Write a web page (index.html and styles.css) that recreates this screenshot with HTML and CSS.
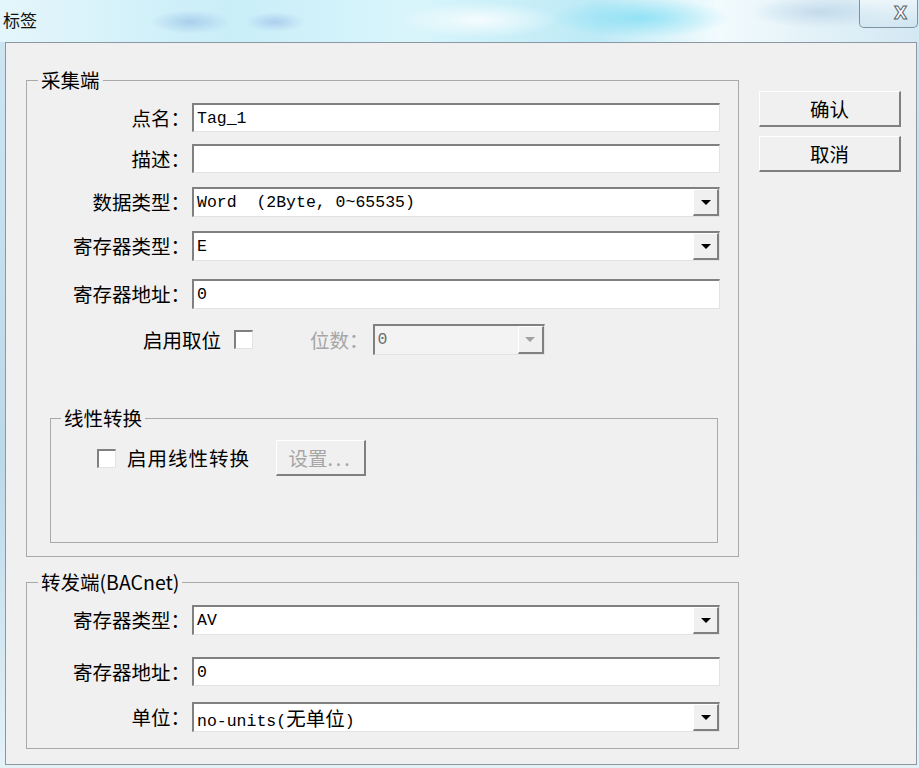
FILE: index.html
```html
<!DOCTYPE html>
<html lang="zh-CN">
<head>
    <meta charset="UTF-8">
    <title>标签</title>
    <link rel="stylesheet" href="styles.css">
</head>
<body>
    <div class="window">
        <div class="titlebar">
            <span class="title">标签</span>
            <span class="close">X</span>
        </div>
        <div class="client">
            <div class="left">
                <fieldset class="group main">
                    <legend>采集端</legend>
                    <div class="row r-name">
                        <label>点名：</label>
                        <input class="edit" type="text" value="Tag_1">
                    </div>
                    <div class="row r-desc">
                        <label>描述：</label>
                        <input class="edit" type="text" value="">
                    </div>
                    <div class="row r-type">
                        <label>数据类型：</label>
                        <div class="combo"><span class="value">Word  (2Byte, 0~65535)</span><span class="arrow"></span></div>
                    </div>
                    <div class="row r-reg">
                        <label>寄存器类型：</label>
                        <div class="combo"><span class="value">E</span><span class="arrow"></span></div>
                    </div>
                    <div class="row r-addr">
                        <label>寄存器地址：</label>
                        <input class="edit tall" type="text" value="0">
                    </div>
                    <div class="bitrow">
                        <span class="lbl">启用取位</span>
                        <span class="check"></span>
                        <span class="lbl disabled-lbl">位数：</span>
                        <div class="combo small disabled"><span class="value">0</span><span class="arrow"></span></div>
                    </div>
                    <fieldset class="group linear">
                        <legend>线性转换</legend>
                        <div class="linrow">
                            <span class="check"></span>
                            <span class="lbl">启用线性转换</span>
                            <button class="btn setup" disabled>设置<span class="dots">...</span></button>
                        </div>
                    </fieldset>
                </fieldset>
                <fieldset class="group bacnet">
                    <legend>转发端(BACnet)</legend>
                    <div class="row b-reg">
                        <label>寄存器类型：</label>
                        <div class="combo"><span class="value">AV</span><span class="arrow"></span></div>
                    </div>
                    <div class="row b-addr">
                        <label>寄存器地址：</label>
                        <input class="edit" type="text" value="0">
                    </div>
                    <div class="row b-unit">
                        <label>单位：</label>
                        <div class="combo"><span class="value">no-units(<span class="cjk">无单位</span>)</span><span class="arrow"></span></div>
                    </div>
                </fieldset>
            </div>
            <div class="buttons">
                <button class="btn">确认</button>
                <button class="btn">取消</button>
            </div>
        </div>
    </div>
</body>
</html>
```

FILE: styles.css
```css
body {
    margin: 0;
    width: 919px;
    height: 768px;
    overflow: hidden;
    font-family: "Noto Sans CJK SC", sans-serif;
    background: linear-gradient(to bottom, #cfe6f2, #bcd9ea 60%, #e4f2f8);
}
.window {
    position: relative;
    height: 768px;
}

/* title bar */
.titlebar {
    position: relative;
    height: 42px;
    box-sizing: border-box;
    padding: 8px 0 0 3px;
    background:
        radial-gradient(ellipse 40px 12px at 190px 22px, rgba(140,180,225,.55), transparent),
        radial-gradient(ellipse 30px 10px at 275px 22px, rgba(140,175,230,.5), transparent),
        radial-gradient(ellipse 90px 20px at 640px 18px, rgba(120,220,245,.7), transparent),
        radial-gradient(ellipse 70px 16px at 820px 12px, rgba(170,200,225,.55), transparent),
        radial-gradient(ellipse 80px 18px at 480px 20px, rgba(255,255,255,.8), transparent),
        linear-gradient(to right, #e4f6fb, #c9eef8 25%, #d9f5fb 45%, #bdeaf6 65%, #f2fbfd 78%, #d3e8f3 100%);
}
.title {
    font-size: 17px;
    line-height: 22px;
    color: #111;
}
.close {
    position: absolute;
    right: 1px;
    top: -1px;
    width: 59px;
    height: 29px;
    box-sizing: border-box;
    border: 1px solid #7f92a2;
    border-top: none;
    border-radius: 0 0 5px 5px;
    background: linear-gradient(rgba(255,255,255,.55), rgba(200,225,238,.45));
    display: flex;
    align-items: center;
    justify-content: center;
    font: bold 17px "DejaVu Sans", sans-serif;
    color: #fff;
    -webkit-text-stroke: 1px #56616b;
    padding-left: 24px;
}

/* client area */
.client {
    display: flex;
    margin-left: 5px;
    width: 912px;
    height: 723px;
    box-sizing: border-box;
    border: 1px solid #8b98a4;
    background: #f0f0f0;
}
.left {
    margin-left: 20px;
    padding-top: 27px;
    width: 713px;
}
.buttons {
    margin-left: 20px;
    padding-top: 48px;
    display: flex;
    flex-direction: column;
    gap: 9px;
}

/* group boxes */
fieldset.group {
    margin: 0;
    padding: 0;
    min-inline-size: 0;
    box-sizing: border-box;
    border: 1px solid #a9a9a9;
}
legend {
    margin-left: 11px;
    padding: 0 3px;
    font-size: 19.5px;
    line-height: 20px;
    color: #000;
}
.main {
    width: 713px;
    padding-bottom: 13px !important;
}
.bacnet {
    width: 713px;
    margin-top: 15px !important;
    padding-bottom: 16px !important;
}
.linear {
    width: 668px;
    margin: 53px 0 0 23px !important;
}
.linear legend {
    margin-left: 10px;
}

/* label + field rows */
.row {
    display: flex;
    align-items: center;
}
.row label {
    width: 163px;
    margin-right: 2px;
    text-align: right;
    font-size: 19.5px;
    line-height: 20px;
    color: #000;
}
.r-name { margin-top: 13px; }
.r-desc { margin-top: 12px; }
.r-type { margin-top: 14px; }
.r-reg { margin-top: 14px; }
.r-addr { margin-top: 18px; }
.b-reg { margin-top: 13px; }
.b-addr { margin-top: 22px; }
.b-unit { margin-top: 16px; }

.edit {
    width: 528px;
    height: 29px;
    margin: 0;
    box-sizing: border-box;
    border-style: solid;
    border-width: 2px 1px 1px 2px;
    border-color: #808080 #e3e3e3 #e3e3e3 #808080;
    background: #fff;
    padding: 0 0 0 3px;
    font: 16.5px "Liberation Mono", "Noto Sans CJK SC", monospace;
    color: #000;
    outline: none;
}
.edit.tall {
    height: 30px;
}

.combo {
    display: flex;
    width: 528px;
    height: 30px;
    box-sizing: border-box;
    border-style: solid;
    border-width: 2px 1px 1px 2px;
    border-color: #808080 #e3e3e3 #e3e3e3 #808080;
    background: #fff;
}
.combo .value {
    flex: 1;
    padding-left: 3px;
    white-space: pre;
    font: 16.5px/27px "Liberation Mono", "Noto Sans CJK SC", monospace;
    color: #000;
}
.combo .cjk {
    font-family: "Noto Sans CJK SC", sans-serif;
    font-size: 19.5px;
}
.combo .arrow {
    width: 26px;
    box-sizing: border-box;
    background: #f0f0f0;
    border-style: solid;
    border-width: 1px 2px 2px 1px;
    border-color: #fff #808080 #808080 #fff;
    display: flex;
    align-items: center;
    justify-content: center;
}
.combo .arrow::after {
    content: "";
    border-left: 5px solid transparent;
    border-right: 5px solid transparent;
    border-top: 5px solid #000;
}

/* bit row */
.bitrow {
    display: flex;
    align-items: center;
    margin-top: 15px;
    padding-left: 116px;
    height: 31px;
}
.lbl {
    font-size: 19.5px;
    line-height: 20px;
    color: #000;
}
.check {
    width: 19px;
    height: 19px;
    box-sizing: border-box;
    background: #fff;
    border-style: solid;
    border-width: 2px 1px 1px 2px;
    border-color: #808080 #e3e3e3 #e3e3e3 #808080;
}
.bitrow .check {
    margin-left: 13px;
}
.disabled-lbl {
    margin-left: 57px;
    color: #a6a6a6;
}
.combo.small {
    width: 172px;
    height: 31px;
    margin-left: 4px;
}
.combo.disabled {
    background: #f3f3f3;
}
.combo.disabled .value {
    color: #6d6d6d;
}
.combo.disabled .arrow::after {
    border-top-color: #a0a0a0;
}

/* linear conversion */
.linrow {
    display: flex;
    align-items: center;
    margin-top: 12px;
    padding: 0 0 66px 46px;
}
.linrow .lbl {
    margin-left: 11px;
    letter-spacing: 1px;
}

/* push buttons */
.btn {
    width: 142px;
    height: 36px;
    margin: 0;
    padding: 0;
    box-sizing: border-box;
    background: #f0f0f0;
    border-style: solid;
    border-width: 1px 2px 2px 1px;
    border-color: #fff #808080 #808080 #fff;
    font-family: "Noto Sans CJK SC", sans-serif;
    font-size: 19.5px;
    color: #000;
}
.btn.setup {
    width: 90px;
    margin-left: 26px;
    color: #a6a6a6;
}
.dots {
    letter-spacing: 3px;
}
```
